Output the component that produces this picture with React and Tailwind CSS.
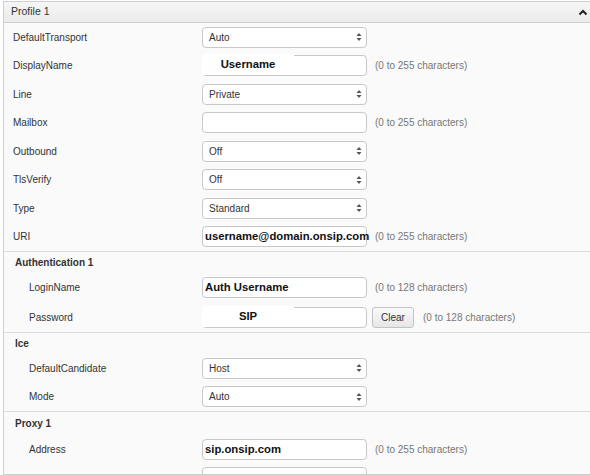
import React from "react";

const font = { fontFamily: '"Liberation Sans", Arial, Helvetica, sans-serif' };

function Arrows() {
  return (
    <svg width="6" height="10" viewBox="0 0 6 10" className="absolute right-[4px] top-1/2 -translate-y-1/2">
      <path d="M3 1 L5.5 4 L0.5 4 Z" fill="#555" />
      <path d="M3 9 L5.5 6 L0.5 6 Z" fill="#555" />
    </svg>
  );
}

function Select({ value }) {
  return (
    <div className="relative w-[165px] h-[21px] border border-[#c8c8c8] rounded-[4px] bg-white flex items-center pl-[6px] text-[10px] text-[#333] shrink-0">
      {value}
      <Arrows />
    </div>
  );
}

function Input({ children, patch, bold }) {
  return (
    <div className="relative w-[165px] h-[21px] border border-[#c8c8c8] rounded-[4px] bg-white flex items-center shrink-0">
      {bold && (
        <span className="pl-[2px] text-[11.3px] font-bold text-[#111] whitespace-nowrap">{bold}</span>
      )}
      {patch && (
        <div className="absolute left-[-1px] top-[-2px] w-[92px] h-[21px] bg-white flex items-center justify-center text-[11.3px] font-bold text-[#111]">
          {patch}
        </div>
      )}
      {children}
    </div>
  );
}

function Hint({ children, className = "ml-[8px]" }) {
  return <span className={`${className} text-[10px] text-[#777] whitespace-nowrap`}>{children}</span>;
}

function Row({ label, indent, children, h = "h-[28.5px]" }) {
  return (
    <div className={`flex items-center ${h}`}>
      <div className={`w-[198px] shrink-0 text-[10px] text-[#333] ${indent ? "pl-[25px]" : "pl-[9px]"}`}>{label}</div>
      {children}
    </div>
  );
}

function SectionHead({ title, className = "h-[22px]" }) {
  return (
    <div className={`flex items-center pl-[11px] text-[10px] font-bold text-[#333] border-t border-[#dcdcdc] ${className}`}>
      {title}
    </div>
  );
}

export default function App() {
  return (
    <div style={font} className="w-[590px] h-[475px] overflow-hidden bg-white pl-[3px] pt-[1px]">
      <div className="h-full border-l border-t border-b border-[#cfcfcf] bg-[#fafafa] overflow-hidden">
        <div className="flex items-center justify-between h-[21px] bg-gradient-to-b from-[#f6f6f6] to-[#ebebeb] border-b border-[#cfcfcf] pl-[7px] pr-[2px]">
          <span className="text-[10.5px] text-[#333]">Profile 1</span>
          <svg width="10" height="7" viewBox="0 0 10 7">
            <path d="M1.5 5.5 L5 2 L8.5 5.5" fill="none" stroke="#222" strokeWidth="2" />
          </svg>
        </div>
        <Row label="DefaultTransport"><Select value="Auto" /></Row>
        <Row label="DisplayName"><Input patch="Username" /><Hint>(0 to 255 characters)</Hint></Row>
        <Row label="Line"><Select value="Private" /></Row>
        <Row label="Mailbox"><Input /><Hint>(0 to 255 characters)</Hint></Row>
        <Row label="Outbound"><Select value="Off" /></Row>
        <Row label="TlsVerify"><Select value="Off" /></Row>
        <Row label="Type"><Select value="Standard" /></Row>
        <Row label="URI"><Input bold="username@domain.onsip.com" /><Hint>(0 to 255 characters)</Hint></Row>

        <SectionHead title="Authentication 1" />
        <Row label="LoginName" indent h="h-[29.5px]"><Input bold="Auth Username" /><Hint>(0 to 128 characters)</Hint></Row>
        <Row label="Password" indent h="h-[29.5px]">
          <Input patch="SIP" />
          <div className="ml-[5px] w-[42px] h-[21px] border border-[#c4c4c4] rounded-[3px] bg-gradient-to-b from-[#fafafa] to-[#e6e6e6] flex items-center justify-center text-[10px] text-[#333]">Clear</div>
          <Hint className="ml-[9px]">(0 to 128 characters)</Hint>
        </Row>

        <SectionHead title="Ice" />
        <Row label="DefaultCandidate" indent><Select value="Host" /></Row>
        <Row label="Mode" indent><Select value="Auto" /></Row>

        <SectionHead title="Proxy 1" className="h-[24px]" />
        <Row label="Address" indent><Input bold="sip.onsip.com" /><Hint>(0 to 255 characters)</Hint></Row>
        <Row label="" indent><Select value="" /></Row>
      </div>
    </div>
  );
}
